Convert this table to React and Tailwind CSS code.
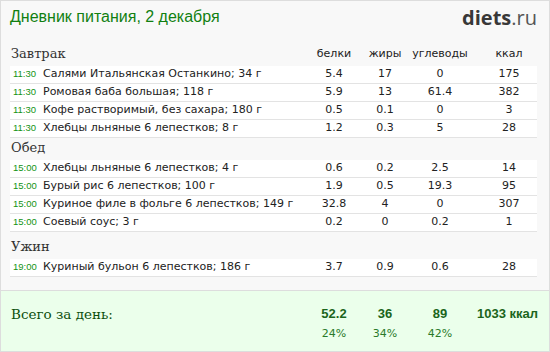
const meals = [
  {
    title: "Завтрак",
    items: [
      ["11:30", "Салями Итальянская Останкино; 34 г", "5.4", "17", "0", "175"],
      ["11:30", "Ромовая баба большая; 118 г", "5.9", "13", "61.4", "382"],
      ["11:30", "Кофе растворимый, без сахара; 180 г", "0.5", "0.1", "0", "3"],
      ["11:30", "Хлебцы льняные 6 лепестков; 8 г", "1.2", "0.3", "5", "28"],
    ],
  },
  {
    title: "Обед",
    items: [
      ["15:00", "Хлебцы льняные 6 лепестков; 4 г", "0.6", "0.2", "2.5", "14"],
      ["15:00", "Бурый рис 6 лепестков; 100 г", "1.9", "0.5", "19.3", "95"],
      ["15:00", "Куриное филе в фольге 6 лепестков; 149 г", "32.8", "4", "0", "307"],
      ["15:00", "Соевый соус; 3 г", "0.2", "0", "0.2", "1"],
    ],
  },
  {
    title: "Ужин",
    items: [["19:00", "Куриный бульон 6 лепестков; 186 г", "3.7", "0.9", "0.6", "28"]],
  },
];

const grid = "grid grid-cols-[299px_50px_52px_58px_68px]";

function Row({ item }) {
  const [time, name, p, f, c, kcal] = item;
  return (
    <div className={`${grid} h-[18px] items-center bg-white border-b border-[#e3e3e3] text-[11px] text-[#222] font-['DejaVu_Sans',sans-serif]`}>
      <div className="flex items-center pl-[3px] whitespace-nowrap overflow-hidden">
        <span className="w-[30px] shrink-0 text-[9.5px] text-[#139313] font-['Liberation_Sans',sans-serif]">{time}</span>
        <span>{name}</span>
      </div>
      <div className="text-center">{p}</div>
      <div className="text-center">{f}</div>
      <div className="text-center">{c}</div>
      <div className="text-center pl-[12px]">{kcal}</div>
    </div>
  );
}

export default function App() {
  return (
    <div className="w-[550px] h-[352px] flex flex-col border border-[#dddddd] bg-[#f8f8f8] overflow-hidden">
      <div className="h-[32px] flex items-center justify-between pl-[9px] pr-[12px]">
        <span className="text-[16px] text-[#118011] font-['Liberation_Sans',sans-serif]">
          Дневник питания, 2 декабря
        </span>
        <span className="text-[20px] leading-none font-['Open_Sans',sans-serif] mt-[2px]">
          <span className="font-bold text-[#383838]">diets</span>
          <span className="text-[#555]">.ru</span>
        </span>
      </div>

      <div className="pl-[9px] pr-[12px] mt-[11px]">
        {meals.map((meal, i) => (
          <div key={meal.title} className={i === 2 ? "mt-[5px]" : ""}>
            <div className={`${grid} h-[22px] items-center pb-[2px] ${i === 0 ? "" : "h-[20px] pb-0"}`}>
              <div className="pl-[1px] text-[13px] text-[#333] font-['DejaVu_Serif',serif]">{meal.title}</div>
              {i === 0 && (
                <>
                  <div className="text-center text-[11px] text-[#222] font-['DejaVu_Sans',sans-serif]">белки</div>
                  <div className="text-center text-[11px] text-[#222] font-['DejaVu_Sans',sans-serif]">жиры</div>
                  <div className="text-center text-[11px] text-[#222] font-['DejaVu_Sans',sans-serif]">углеводы</div>
                  <div className="text-center pl-[12px] text-[11px] text-[#222] font-['DejaVu_Sans',sans-serif]">ккал</div>
                </>
              )}
            </div>
            {meal.items.map((item, j) => (
              <Row key={j} item={item} />
            ))}
          </div>
        ))}
      </div>

      <div className="mt-[13px] flex-1 border-t border-[#dddddd] bg-[#ebffeb] pl-[9px] pr-[12px] pt-[13px]">
        <div className={`${grid} items-center h-[20px]`}>
          <div className="pl-[1px] text-[13.5px] text-[#0d4f0d] font-['DejaVu_Serif',serif]">Всего за день:</div>
          <div className="text-center text-[13px] font-bold text-[#1b651b] font-['Liberation_Sans',sans-serif]">52.2</div>
          <div className="text-center text-[13px] font-bold text-[#1b651b] font-['Liberation_Sans',sans-serif]">36</div>
          <div className="text-center text-[13px] font-bold text-[#1b651b] font-['Liberation_Sans',sans-serif]">89</div>
          <div className="text-center pl-[8px] text-[13px] font-bold text-[#1b651b] font-['Liberation_Sans',sans-serif] whitespace-nowrap">1033 ккал</div>
        </div>
        <div className={`${grid} items-center h-[20px]`}>
          <div />
          <div className="text-center text-[11px] text-[#2a7a2a] font-['DejaVu_Sans',sans-serif]">24%</div>
          <div className="text-center text-[11px] text-[#2a7a2a] font-['DejaVu_Sans',sans-serif]">34%</div>
          <div className="text-center text-[11px] text-[#2a7a2a] font-['DejaVu_Sans',sans-serif]">42%</div>
          <div />
        </div>
      </div>
    </div>
  );
}
